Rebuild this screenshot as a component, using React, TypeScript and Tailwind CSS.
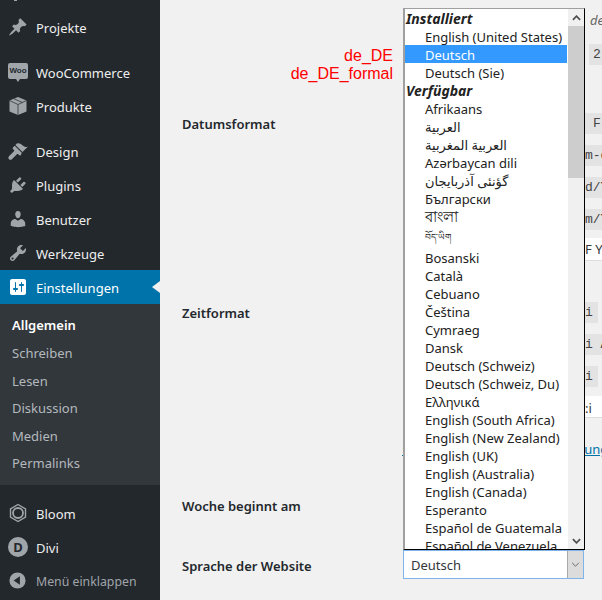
import type { ReactNode } from 'react';

const ui = "font-['Noto_Sans','DejaVu_Sans',sans-serif]";

function Dash({ d }: { d: string }) {
  return (
    <svg viewBox="0 0 20 20" className="w-5 h-5 fill-[#a0a5aa]">
      <path d={d} />
    </svg>
  );
}

const pin =
  'M10.44 3.02l1.82-1.82 6.36 6.35-1.83 1.82c-1.05-.68-2.48-.57-3.41.36l-.75.75c-.92.93-1.04 2.35-.35 3.41l-1.83 1.82-2.41-2.41-2.8 2.79c-.42.42-3.38 2.71-3.8 2.29s1.86-3.39 2.28-3.81l2.79-2.79L4.1 9.36l1.83-1.82c1.05.69 2.48.57 3.4-.36l.75-.75c.93-.92 1.05-2.35.36-3.41z';
const brush =
  'M14.48 11.06L7.41 3.99l1.5-1.5c.5-.56 2.3-.47 3.51.32 1.21.8 1.43 1.28 2.91 2.1 1.18.64 2.45 1.26 4.45.85zm-.71.71L6.7 4.7 4.93 6.47c-.39.39-.39 1.02 0 1.41l1.06 1.06c.39.39.39 1.03 0 1.42l-5 5c-.8.8-.8 2.1 0 2.9s2.1.8 2.9 0l5-5c.39-.39 1.02-.39 1.41 0l1.06 1.06c.39.39 1.02.39 1.41 0z';
const plug =
  'M13.11 4.36L9.87 7.6 8 5.73l3.24-3.24c.35-.34 1.05-.2 1.56.32.52.51.66 1.21.31 1.55zm-8 1.77l.91-1.12 9.01 9.01-1.19.84c-.71.71-2.63 1.16-3.82 1.16H6.14L4.9 17.26c-.59.59-1.54.59-2.12 0-.59-.58-.59-1.53 0-2.12l1.24-1.24v-3.88c0-1.13.4-3.19 1.09-3.89zm7.26 3.97l3.24-3.24c.34-.35 1.04-.21 1.55.31.52.51.66 1.21.31 1.55l-3.24 3.25z';
const user =
  'M10 9.25c-2.27 0-2.73-3.44-2.73-3.44C7 4.02 7.82 2 9.97 2c2.16 0 2.98 2.02 2.71 3.81 0 0-.41 3.44-2.68 3.44zm0 2.57L12.72 10c2.39 0 4.52 2.33 4.52 4.53v2.49s-3.65 1.13-7.24 1.13c-3.65 0-7.24-1.13-7.24-1.13v-2.49c0-2.25 1.94-4.48 4.47-4.48z';
const wrench =
  'M16.68 9.77c-1.34 1.34-3.3 1.67-4.95.99l-5.41 6.52c-.99.99-2.59.99-3.58 0s-.99-2.59 0-3.57l6.52-5.42c-.68-1.65-.35-3.61.99-4.95 1.28-1.28 3.12-1.62 4.72-1.06l-2.89 2.89 2.82 2.82 2.86-2.87c.53 1.58.18 3.39-1.08 4.65zM3.81 16.21c.4.39 1.04.39 1.43 0 .4-.4.4-1.04 0-1.43-.39-.4-1.03-.4-1.43 0-.39.39-.39 1.03 0 1.43z';
const sliders =
  'M18 16V4c0-1.1-.9-2-2-2H4c-1.1 0-2 .9-2 2v12c0 1.1.9 2 2 2h12c1.1 0 2-.9 2-2zM8 11h1c.55 0 1 .45 1 1s-.45 1-1 1H8v1.5c0 .28-.22.5-.5.5s-.5-.22-.5-.5V13H6c-.55 0-1-.45-1-1s.45-1 1-1h1V5.500c0-.28.22-.5.5-.5s.5.22.5.5V11zm5-2h-1c-.55 0-1-.45-1-1s.45-1 1-1h1V5.500c0-.28.22-.5.5-.5s.5.22.5.5V7h1c.55 0 1 .45 1 1s-.45 1-1 1h-1v5.500c0 .28-.22.5-.5.5s-.5-.22-.5-.5V9z';

function WooIcon() {
  return (
    <div className="relative w-5 h-4 -mt-[3px] rounded-[2px] bg-[#a0a5aa] flex items-center justify-center">
      <span className="text-[8px] leading-none font-bold text-[#23282d] font-['Liberation_Sans',sans-serif]">Woo</span>
      <span className="absolute -bottom-[3px] left-[8px] w-0 h-0 border-l-[2px] border-r-[2px] border-t-[3px] border-l-transparent border-r-transparent border-t-[#a0a5aa]" />
    </div>
  );
}

function BoxIcon() {
  return (
    <svg viewBox="0 0 20 20" className="w-5 h-5">
      <path d="M10 1l8.500 3.500v11L10 19l-8.500-3.500v-11z" className="fill-[#a0a5aa]" />
      <path d="M1.500 4.500L10 8.500l8.500-4M10 8.500V19M6 2.800l8.500 3.700" className="fill-none stroke-[#23282d]" strokeWidth="0.7" />
    </svg>
  );
}

function BloomIcon() {
  return (
    <svg viewBox="0 0 20 20" className="w-5 h-5 fill-none stroke-[#a0a5aa]">
      <path d="M10 1.500l7.500 4.300v8.400L10 18.500l-7.500-4.300V5.800z" strokeWidth="1.400" />
      <circle cx="10" cy="10" r="5" strokeWidth="1.800" />
    </svg>
  );
}

function DiviIcon() {
  return (
    <div className="w-5 h-5 rounded-full bg-[#a0a5aa] flex items-center justify-center text-[13px] leading-none font-bold text-[#23282d]">
      D
    </div>
  );
}

function CollapseIcon() {
  return (
    <svg viewBox="0 0 20 20" className="w-[19px] h-[19px]">
      <circle cx="10" cy="10" r="8.500" className="fill-[#a0a5aa]" />
      <path d="M12.500 5.500v9L6 10z" className="fill-[#23282d]" />
    </svg>
  );
}

function MenuItem({ icon, label, muted }: { icon: ReactNode; label: string; muted?: boolean }) {
  return (
    <div className="flex items-center h-[34px]">
      <div className="w-9 pl-[8px] flex justify-start">{icon}</div>
      <span className={muted ? 'pt-[4px] text-[12.3px] text-[#a0a5aa]' : 'pt-[4px] text-[13px] text-[#eeeeee]'}>{label}</span>
    </div>
  );
}

function Sidebar() {
  return (
    <aside className="w-[160px] h-full shrink-0 bg-[#23282d] flex flex-col overflow-hidden">
      <div className="h-px w-[3px] ml-[14px] bg-[#a0a5aa]" />
      <div className="mt-[9px]">
        <MenuItem icon={<Dash d={pin} />} label="Projekte" />
      </div>
      <div className="mt-[11px]">
        <MenuItem icon={<WooIcon />} label="WooCommerce" />
        <MenuItem icon={<BoxIcon />} label="Produkte" />
      </div>
      <div className="mt-[11px]">
        <MenuItem icon={<Dash d={brush} />} label="Design" />
        <MenuItem icon={<Dash d={plug} />} label="Plugins" />
        <MenuItem icon={<Dash d={user} />} label="Benutzer" />
        <MenuItem icon={<Dash d={wrench} />} label="Werkzeuge" />
      </div>
      <div className="relative flex items-center h-[34px] bg-[#0073aa]">
        <div className="w-9 pl-[8px]">
          <svg viewBox="0 0 20 20" className="w-5 h-5 fill-white">
            <path d={sliders} />
          </svg>
        </div>
        <span className="pt-[4px] text-[13px] text-white">Einstellungen</span>
        <span className="absolute right-0 top-[11px] w-0 h-0 border-y-[6px] border-r-[8px] border-y-transparent border-r-[#f1f1f1]" />
      </div>
      <div className="bg-[#32373c] h-[181px] pt-[7px] pl-[12px] flex flex-col text-[13px] text-[#b4b9be]">
        <span className="h-[28px] leading-[28px] font-semibold text-white">Allgemein</span>
        <span className="h-[28px] leading-[28px]">Schreiben</span>
        <span className="h-[28px] leading-[28px]">Lesen</span>
        <span className="h-[27px] leading-[27px]">Diskussion</span>
        <span className="h-[28px] leading-[28px]">Medien</span>
        <span className="h-[27px] leading-[27px]">Permalinks</span>
      </div>
      <div className="mt-[11px]">
        <MenuItem icon={<BloomIcon />} label="Bloom" />
        <MenuItem icon={<DiviIcon />} label="Divi" />
        <div className="-mt-px">
          <MenuItem icon={<CollapseIcon />} label="Menü einklappen" muted />
        </div>
      </div>
    </aside>
  );
}

const installed = ['English (United States)', 'Deutsch', 'Deutsch (Sie)'];
const beforeScripts = ['Afrikaans', 'العربية', 'العربية المغربية', 'Azərbaycan dili', 'گؤنئی آذربایجان', 'Български'];
const afterScripts = [
  'Bosanski',
  'Català',
  'Cebuano',
  'Čeština',
  'Cymraeg',
  'Dansk',
  'Deutsch (Schweiz)',
  'Deutsch (Schweiz, Du)',
  'Ελληνικά',
  'English (South Africa)',
  'English (New Zealand)',
  'English (UK)',
  'English (Australia)',
  'English (Canada)',
  'Esperanto',
  'Español de Guatemala',
  'Español de Venezuela',
];

function Option({ label, selected }: { label: string; selected?: boolean }) {
  return (
    <div
      dir="ltr"
      className={`h-[18px] w-[162px] leading-[20px] pl-[20px] whitespace-nowrap text-left ${selected ? 'bg-[#3399ff] text-white' : 'text-[#222222]'}`}
    >
      {label}
    </div>
  );
}

function Group({ label }: { label: string }) {
  return <div className="h-[18px] leading-[20px] pl-[1px] text-[14px] font-bold italic text-[#222222]">{label}</div>;
}

function LanguagePopup() {
  return (
    <div className={`absolute left-[243px] top-[8px] w-[182px] h-[542px] flex bg-white border-t border-l-2 border-r border-b border-t-[#a0a0a0] border-l-[#a0a0a0] border-r-black border-b-black text-[13px] ${ui}`}>
      <div className="w-[163px] overflow-hidden">
        <Group label="Installiert" />
        {installed.map((l) => (
          <Option key={l} label={l} selected={l === 'Deutsch'} />
        ))}
        <Group label="Verfügbar" />
        {beforeScripts.map((l) => (
          <Option key={l} label={l} />
        ))}
        <div className="h-[18px] leading-[18px] pl-[20px] text-[15px] text-[#222222]">বাংলা</div>
        <div className="h-[23px] leading-[23px] pl-[20px] text-[9px] text-[#222222]">བོད་ཡིག</div>
        {afterScripts.map((l) => (
          <Option key={l} label={l} />
        ))}
      </div>
      <div className="w-[16px] bg-[#f0f0f0] flex flex-col">
        <div className="h-[17px] flex items-center justify-center">
          <svg viewBox="0 0 10 6" className="w-[9px] h-[6px] fill-none stroke-[#505050] stroke-[2]">
            <path d="M1 5l4-4 4 4" />
          </svg>
        </div>
        <div className="h-[152px] bg-[#cdcdcd]" />
        <div className="flex-1" />
        <div className="h-[17px] flex items-center justify-center">
          <svg viewBox="0 0 10 6" className="w-[9px] h-[6px] fill-none stroke-[#505050] stroke-[2]">
            <path d="M1 1l4 4 4-4" />
          </svg>
        </div>
      </div>
    </div>
  );
}

function FormatColumn() {
  const chip = "h-[21px] leading-[21px] bg-[#e3e3e3] font-['Liberation_Mono',monospace] text-[13px] text-[#444444] whitespace-nowrap overflow-hidden";
  return (
    <div className="w-[200px] overflow-hidden">
      <div className="mt-[11px] h-[18px] leading-[18px] pl-[188px] italic text-[13px] text-[#666666] whitespace-nowrap">de</div>
      <div className="pl-[187px] mt-[15px]"><div className={`${chip} pl-[4px]`}>2</div></div>
      <div className="pl-[183px] mt-[48px]"><div className={`${chip} pl-[8px]`}>F</div></div>
      <div className="pl-[183px] mt-[11px]"><div className={chip}>m-d</div></div>
      <div className="pl-[183px] mt-[11px]"><div className={chip}>d/Y</div></div>
      <div className="pl-[183px] mt-[11px]"><div className={chip}>m/Y</div></div>
      <div className="pl-[183px] mt-[8px]">
        <div className="h-[23px] leading-[22px] bg-white border-b border-[#dddddd] text-[13px] text-[#32373c] whitespace-nowrap overflow-hidden">F Y</div>
      </div>
      <div className="pl-[183px] mt-[41px]"><div className={`${chip} w-[13px]`}>i</div></div>
      <div className="pl-[183px] mt-[11px]"><div className={chip}>i A</div></div>
      <div className="pl-[183px] mt-[11px]"><div className={`${chip} w-[13px]`}>i</div></div>
      <div className="pl-[183px] mt-[9px]">
        <div className="h-[22px] leading-[24px] bg-white border-b border-[#dddddd] text-[13px] text-[#32373c] whitespace-nowrap overflow-hidden">:i</div>
      </div>
      <div className="mt-[22px] h-[19px] leading-[19px] text-[13px] text-[#0073aa] underline whitespace-nowrap">Dokumentation zur Formatierung</div>
      <div className="mt-[91px] ml-px w-[181px] h-[29px] bg-white border border-[#7eb4ea] flex items-center pl-[7px] text-[13px] text-[#32373c]">
        <span className="flex-1 pt-[2px]">Deutsch</span>
        <div className="w-[16px] h-full bg-[#dcdcdc] border-l border-[#a8a8a8] flex items-center justify-center">
          <svg viewBox="0 0 10 6" className="w-[9px] h-[5px] fill-none stroke-[#505050]">
            <path d="M1 1l4 4 4-4" />
          </svg>
        </div>
      </div>
    </div>
  );
}

function Main() {
  const label = 'h-5 leading-5 text-[13px] font-semibold text-[#23282d] whitespace-nowrap pl-[22px]';
  return (
    <main className="relative flex-1 flex bg-[#f1f1f1] overflow-hidden">
      <div className="w-[242px] shrink-0">
        <div className="mt-[47px] pr-[9px] text-right text-[16px] leading-[18px] text-[#ff0000] font-['Liberation_Sans',sans-serif]">
          <div>de_DE</div>
          <div>de_DE_formal</div>
        </div>
        <div className={`${label} mt-[31px]`}>Datumsformat</div>
        <div className={`${label} mt-[169px]`}>Zeitformat</div>
        <div className={`${label} mt-[173px]`}>Woche beginnt am</div>
        <div className={`${label} mt-[40px]`}>Sprache der Website</div>
      </div>
      <FormatColumn />
      <LanguagePopup />
    </main>
  );
}

export default function App() {
  return (
    <div className={`w-[602px] h-[600px] flex overflow-hidden ${ui}`}>
      <Sidebar />
      <Main />
    </div>
  );
}
